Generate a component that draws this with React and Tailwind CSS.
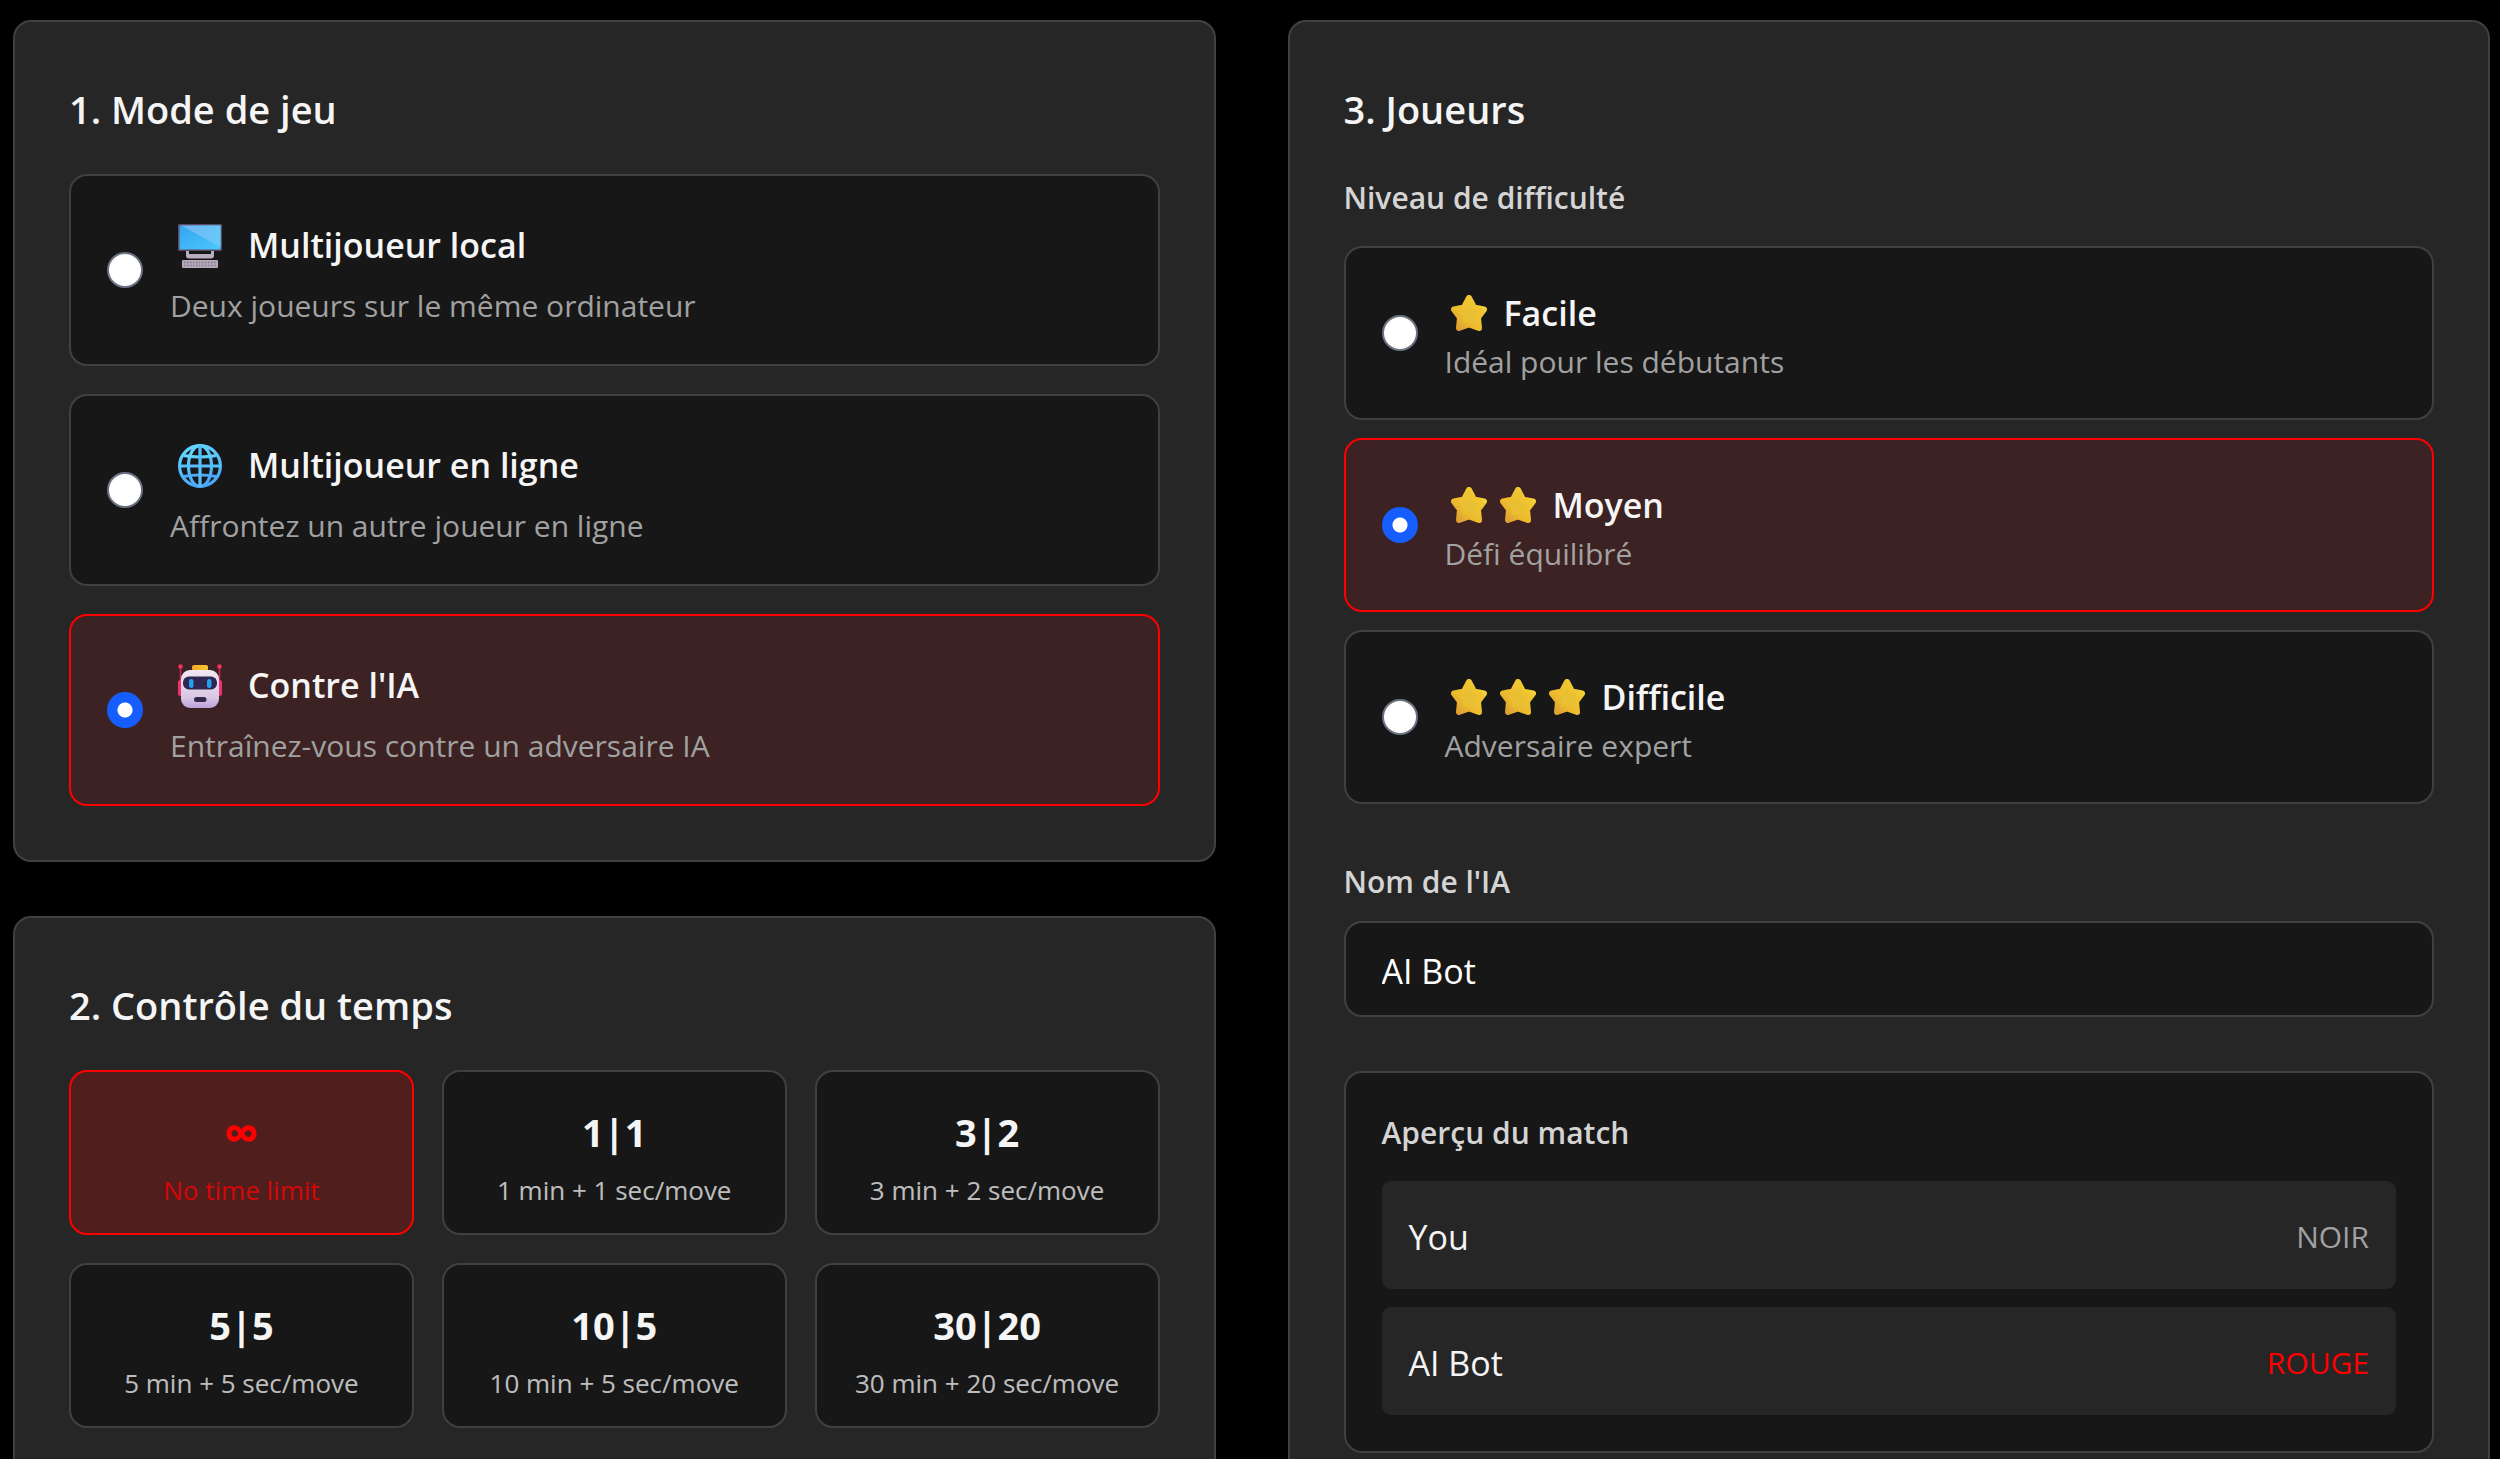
import { useState } from 'react';
import clsx from 'clsx';

const MonitorIcon = () => (
  <svg viewBox="0 0 44 44" className="w-11 h-11" aria-hidden="true">
    <defs>
      <linearGradient id="screen" x1="0" y1="0" x2="1" y2="1">
        <stop offset="0" stopColor="#35a3f0" />
        <stop offset="1" stopColor="#4cc9fb" />
      </linearGradient>
      <linearGradient id="glare" x1="0" y1="0" x2="1" y2="0.4">
        <stop offset="0" stopColor="#74b4f2" />
        <stop offset="1" stopColor="#67c8fa" />
      </linearGradient>
    </defs>
    <rect x="0" y="0" width="44" height="27" rx="1" fill="#5a4a66" />
    <rect x="1.5" y="1.5" width="41" height="24" fill="url(#screen)" />
    <path d="M3 1.5h39.500v21.500z" fill="url(#glare)" />
    <path d="M8 27h3v3h22v-3h3v4.500q0 3-3 3H11q-3 0-3-3z" fill="#b8aebf" />
    <rect x="4" y="36" width="36" height="8" rx="1" fill="#b3a9b8" />
    <path d="M6 38.500h32M6 41.500h32" stroke="#85798d" strokeWidth="1.500" strokeDasharray="1.500 1.500" />
  </svg>
);

const GlobeIcon = () => (
  <svg viewBox="0 0 44 44" className="w-11 h-11" fill="none" aria-hidden="true">
    <defs>
      <linearGradient id="globe" x1="0.300" y1="0" x2="0.600" y2="1">
        <stop offset="0" stopColor="#62d6fd" />
        <stop offset="1" stopColor="#4aa6f8" />
      </linearGradient>
    </defs>
    <g stroke="url(#globe)" strokeWidth="3.200">
      <circle cx="22" cy="22" r="20.400" />
      <ellipse cx="22" cy="22" rx="11.500" ry="20.400" />
      <path d="M5.500 11.500q16.500 3 33 0M5.500 32.500q16.500-3 33 0" />
    </g>
    <path d="M22 1v42M1 22h42" stroke="#56bffc" strokeWidth="3.200" />
  </svg>
);

const RobotIcon = () => (
  <svg viewBox="0 0 44 44" className="w-11 h-11" aria-hidden="true">
    <defs>
      <linearGradient id="face" x1="0" y1="0" x2="0" y2="1">
        <stop offset="0" stopColor="#f0e8f5" />
        <stop offset="0.700" stopColor="#d9c9e3" />
        <stop offset="1" stopColor="#bda2dc" />
      </linearGradient>
      <linearGradient id="lamp" x1="0" y1="0" x2="1" y2="0">
        <stop offset="0" stopColor="#f7a62b" />
        <stop offset="1" stopColor="#f9c82e" />
      </linearGradient>
    </defs>
    <path d="M2.500 2v16M41.500 2v16" stroke="#c9285a" strokeWidth="1.500" />
    <circle cx="2.500" cy="2.500" r="2.200" fill="#f5316a" />
    <circle cx="41.500" cy="2.500" r="2.200" fill="#f5316a" />
    <rect x="0" y="16" width="6" height="16" rx="2.500" fill="#f0326f" />
    <rect x="38" y="16" width="6" height="16" rx="2.500" fill="#f0326f" />
    <rect x="14" y="1" width="16" height="6" rx="2" fill="url(#lamp)" />
    <rect x="3" y="6" width="38" height="38" rx="9" fill="url(#face)" />
    <rect x="5" y="12.500" width="34" height="13" rx="6" fill="#30264f" />
    <rect x="11" y="15" width="4.500" height="9" rx="2.200" fill="#23a0ee" />
    <rect x="29" y="15" width="4.500" height="9" rx="2.200" fill="#23a0ee" />
    <rect x="16" y="33" width="12.500" height="5" rx="2.500" fill="#33284f" />
  </svg>
);

const StarIcon = () => (
  <svg viewBox="0 0 36 36" className="w-9 h-9" aria-hidden="true">
    <defs>
      <linearGradient id="star" x1="0" y1="1" x2="1" y2="0">
        <stop offset="0" stopColor="#d99a35" />
        <stop offset="0.350" stopColor="#edbb2e" />
        <stop offset="0.750" stopColor="#f0c631" />
        <stop offset="1" stopColor="#fbe548" />
      </linearGradient>
    </defs>
    <path
      d="M18 3 23 12.500 33 14.500 27 22.500 28 33 18 29.500 8 33 9 22.500 3 14.500 13 12.500z"
      fill="url(#star)"
      stroke="url(#star)"
      strokeWidth="6"
      strokeLinejoin="round"
    />
    <path d="M18 9 21.500 15 28 17 23.500 22 24 28 18 26 12 28 12.500 22 8 17 14.500 15z" fill="#e9bf33" />
  </svg>
);

const gameModes = [
  { id: 'local', title: 'Multijoueur local', description: 'Deux joueurs sur le même ordinateur', Icon: MonitorIcon },
  { id: 'online', title: 'Multijoueur en ligne', description: 'Affrontez un autre joueur en ligne', Icon: GlobeIcon },
  { id: 'ai', title: "Contre l'IA", description: 'Entraînez-vous contre un adversaire IA', Icon: RobotIcon },
];

const timeControls = [
  { label: '∞', description: 'No time limit' },
  { label: '1|1', description: '1 min + 1 sec/move' },
  { label: '3|2', description: '3 min + 2 sec/move' },
  { label: '5|5', description: '5 min + 5 sec/move' },
  { label: '10|5', description: '10 min + 5 sec/move' },
  { label: '30|20', description: '30 min + 20 sec/move' },
];

const difficulties = [
  { id: 'easy', title: 'Facile', description: 'Idéal pour les débutants', stars: 1 },
  { id: 'medium', title: 'Moyen', description: 'Défi équilibré', stars: 2 },
  { id: 'hard', title: 'Difficile', description: 'Adversaire expert', stars: 3 },
];

const Panel = ({ title, children }) => (
  <section className="bg-neutral-800 border-2 border-neutral-700 rounded-[18px] p-[54px]">
    <h2 className="mb-8 text-[38px] leading-[66px] font-semibold text-neutral-100">{title}</h2>
    {children}
  </section>
);

const RadioCard = ({ name, value, checked, onChange, children }) => (
  <label
    className={clsx(
      'flex items-center gap-[27px] border-2 rounded-[18px] p-9 cursor-pointer',
      checked ? 'border-[#ff0000] bg-[#3c2222]' : 'border-neutral-700 bg-neutral-900'
    )}
  >
    <input
      type="radio"
      name={name}
      value={value}
      checked={checked}
      onChange={() => onChange(value)}
      className="w-9 h-9 shrink-0 appearance-none rounded-full border-2 border-gray-500 bg-white checked:border-0 checked:bg-[radial-gradient(circle,white_7px,#155dfc_8px)]"
    />
    <div>{children}</div>
  </label>
);

const PlayerRow = ({ name, color, colorClass }) => (
  <div className="flex items-center justify-between px-[27px] pt-[29px] pb-[25px] rounded-[9px] bg-neutral-800">
    <span className="text-[34px] leading-[54px] text-neutral-100">{name}</span>
    <span className={clsx('text-[30px] leading-[54px]', colorClass)}>{color}</span>
  </div>
);

const App = () => {
  const [mode, setMode] = useState('ai');
  const [time, setTime] = useState('∞');
  const [difficulty, setDifficulty] = useState('medium');
  const [aiName, setAiName] = useState('AI Bot');

  return (
    <div className="min-h-screen bg-black pt-5 pb-14 pl-[13px] pr-[10px] font-['Open_Sans',sans-serif]">
      <div className="grid grid-cols-2 gap-[72px] items-start">
        <div className="flex flex-col gap-[54px]">
          <Panel title="1. Mode de jeu">
            <div className="flex flex-col gap-7">
              {gameModes.map(({ id, title, description, Icon }) => (
                <RadioCard key={id} name="mode" value={id} checked={mode === id} onChange={setMode}>
                  <div className="flex items-center gap-[18px] h-[67px]">
                    <span className="w-[60px] flex justify-center">
                      <Icon />
                    </span>
                    <span className="text-[34px] font-semibold text-neutral-100">{title}</span>
                  </div>
                  <p className="pt-[5px] text-[30px] leading-11 text-neutral-400">{description}</p>
                </RadioCard>
              ))}
            </div>
          </Panel>

          <Panel title="2. Contrôle du temps">
            <div className="grid grid-cols-3 gap-7">
              {timeControls.map(({ label, description }) => (
                <button
                  key={label}
                  type="button"
                  onClick={() => setTime(label)}
                  className={clsx(
                    'border-2 rounded-[18px] px-[27px] pt-[29px] pb-[25px] text-center cursor-pointer',
                    time === label
                      ? 'border-[#ff0000] bg-[#511e1e] text-[#ff0000]'
                      : 'border-neutral-700 bg-neutral-900 text-neutral-100'
                  )}
                >
                  <div
                    className={clsx(
                      'leading-[62px] font-bold',
                      label === '∞' ? 'text-[50px]' : 'text-[38px]'
                    )}
                  >
                    {label}
                  </div>
                  <div className="mt-[9px] text-[26px] leading-9 opacity-75">{description}</div>
                </button>
              ))}
            </div>
          </Panel>
        </div>

        <Panel title="3. Joueurs">
          <fieldset>
            <legend className="mb-[24px] text-[30px] leading-[48px] font-semibold text-neutral-300">
              Niveau de difficulté
            </legend>
            <div className="flex flex-col gap-[18px]">
              {difficulties.map(({ id, title, description, stars }) => (
                <RadioCard
                  key={id}
                  name="difficulty"
                  value={id}
                  checked={difficulty === id}
                  onChange={setDifficulty}
                >
                  <div className="flex items-center gap-[10px] h-[58px]">
                    <span className="flex">
                      {Array.from({ length: stars }, (_, i) => (
                        <span key={i} className="w-[49px] flex justify-center">
                          <StarIcon />
                        </span>
                      ))}
                    </span>
                    <span className="text-[34px] font-semibold text-neutral-100">{title}</span>
                  </div>
                  <p className="text-[30px] leading-10 text-neutral-400">{description}</p>
                </RadioCard>
              ))}
            </div>
          </fieldset>

          <div className="mt-[54px]">
            <label
              htmlFor="ai-name"
              className="block mb-[15px] text-[30px] leading-[48px] font-semibold text-neutral-300"
            >
              Nom de l'IA
            </label>
            <input
              id="ai-name"
              type="text"
              value={aiName}
              onChange={(e) => setAiName(e.target.value)}
              className="block w-full h-24 px-9 pt-1 border-2 border-neutral-700 rounded-[18px] bg-neutral-900 text-[34px] text-white"
            />
          </div>

          <div className="mt-[54px] p-9 border-2 border-neutral-700 rounded-[18px] bg-neutral-900">
            <h3 className="mb-[24px] text-[30px] leading-[48px] font-semibold text-neutral-300">
              Aperçu du match
            </h3>
            <div className="flex flex-col gap-[18px]">
              <PlayerRow name="You" color="NOIR" colorClass="text-neutral-400" />
              <PlayerRow name={aiName} color="ROUGE" colorClass="text-[#ff0000]" />
            </div>
          </div>
        </Panel>
      </div>
    </div>
  );
};

export default App;
